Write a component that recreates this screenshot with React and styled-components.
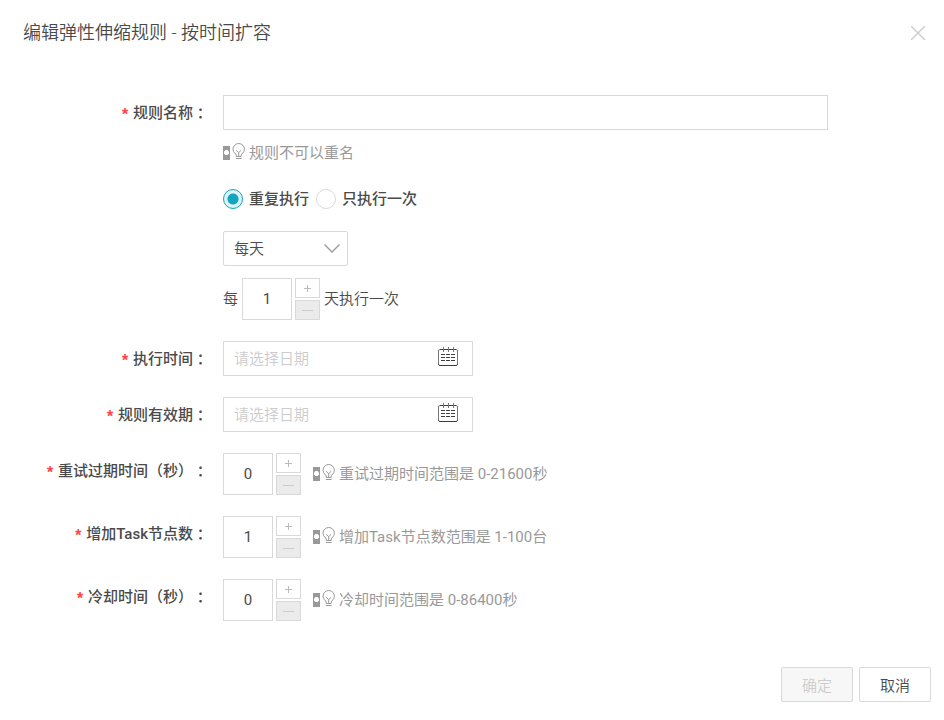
import React, { useState } from "react";
import styled, { createGlobalStyle } from "styled-components";

const CalendarIcon = () => (
  <svg width="21" height="24" viewBox="0 0 21 24" fill="none" stroke="#3c3c3c">
    <path d="M0.5 18V5a1.500 1.500 0 0 1 1.500-1.500h16a1.500 1.500 0 0 1 1.500 1.500v13" stroke="#777" />
    <path d="M0.500 18a1.500 1.500 0 0 0 1.500 1.500h16a1.500 1.500 0 0 0 1.500-1.500M2 3.500h16" />
    <path d="M5.500 1v5M10.500 1v5M15.500 1v5" stroke="#777" />
    <path d="M3 8.500h4M8 8.500h4M13 8.500h4M3 11.500h4M8 11.500h4M13 11.500h4M3 14.500h4M8 14.500h4M13 14.500h4" />
  </svg>
);

const BulbIcon = () => (
  <svg width="23" height="20" viewBox="0 0 23 20" fill="none" stroke="#999">
    <path d="M0 3h7v14H0z" fill="#999" stroke="none" />
    <path d="M2.500 7h2l1.500 1.500v2L4.500 12h-2L1 10.500v-2z" fill="#fff" stroke="none" />
    <path d="M13.200 13.500v-1.500c0-1.200-3.200-2.400-3.200-5.800a5.700 5.700 0 0 1 11.400 0c0 3.400-3.200 4.600-3.200 5.800v1.500z" />
    <path d="M12.800 15.500h5.800M13.300 7.300l2.400 2.400 2.400-2.400M15.700 9.700v3.800" />
  </svg>
);

const Hint = ({ children }) => (
  <HintText>
    <BulbIcon />
    {children}
  </HintText>
);

const Field = ({ label, htmlFor, children }) => (
  <FieldRow>
    <Label htmlFor={htmlFor}>
      <Star>*</Star>
      <span>{label}</span>
      <Colon>：</Colon>
    </Label>
    <Content>{children}</Content>
  </FieldRow>
);

const Stepper = ({ id, label, min }) => {
  const [value, setValue] = useState(min);
  return (
    <StepperBox>
      <StepperInput
        id={id}
        aria-label={label}
        value={value}
        onChange={(e) => setValue(Number(e.target.value) || min)}
      />
      <StepperButtons>
        <StepButton type="button" aria-label="增加" onClick={() => setValue(value + 1)}>
          <svg width="7" height="7" viewBox="0 0 7 7" stroke="currentColor">
            <path d="M3.500 0v7M0 3.500h7" />
          </svg>
        </StepButton>
        <StepButton
          type="button"
          aria-label="减少"
          disabled={value <= min}
          onClick={() => setValue(value - 1)}
        >
          <svg width="11" height="7" viewBox="0 0 11 7" stroke="currentColor">
            <path d="M0 3.500h11" />
          </svg>
        </StepButton>
      </StepperButtons>
    </StepperBox>
  );
};

const DatePicker = ({ id }) => (
  <DateBox>
    <DateInput id={id} placeholder="请选择日期" />
    <CalendarIcon />
  </DateBox>
);

const App = () => {
  const [repeat, setRepeat] = useState(true);
  return (
    <Dialog role="dialog" aria-labelledby="title">
      <GlobalStyle />
      <Header>
        <Title id="title">编辑弹性伸缩规则 - 按时间扩容</Title>
        <CloseButton type="button" aria-label="关闭">
          <svg width="14" height="14" viewBox="0 0 14 14" stroke="#ccc" strokeWidth="1.4">
            <path d="M0 0l14 14M14 0L0 14" />
          </svg>
        </CloseButton>
      </Header>

      <Form>
        <Field label="规则名称" htmlFor="name">
          <Stack>
            <TextInput id="name" />
            <NameHint>
              <Hint>规则不可以重名</Hint>
            </NameHint>
            <RadioGroup>
              <RadioLabel>
                <Radio name="mode" checked={repeat} onChange={() => setRepeat(true)} />
                重复执行
              </RadioLabel>
              <RadioLabel>
                <Radio name="mode" checked={!repeat} onChange={() => setRepeat(false)} />
                只执行一次
              </RadioLabel>
            </RadioGroup>
            <SelectBox>
              <Select aria-label="执行周期">
                <option>每天</option>
                <option>每周</option>
                <option>每月</option>
              </Select>
              <svg width="16" height="9" viewBox="0 0 16 9" fill="none" stroke="#999" strokeWidth="1.3">
                <path d="M0.500 0.500L8 8l7.500-7.500" />
              </svg>
            </SelectBox>
            <Interval>
              <span>每</span>
              <Stepper label="间隔天数" min={1} />
              <span>天执行一次</span>
            </Interval>
          </Stack>
        </Field>
        <Field label="执行时间" htmlFor="runAt">
          <DatePicker id="runAt" />
        </Field>
        <Field label="规则有效期" htmlFor="expires">
          <DatePicker id="expires" />
        </Field>
        <Field label="重试过期时间（秒）" htmlFor="retry">
          <Stepper id="retry" min={0} />
          <Hint>重试过期时间范围是 0-21600秒</Hint>
        </Field>
        <Field label="增加Task节点数" htmlFor="nodes">
          <Stepper id="nodes" min={1} />
          <Hint>增加Task节点数范围是 1-100台</Hint>
        </Field>
        <Field label="冷却时间（秒）" htmlFor="cooldown">
          <Stepper id="cooldown" min={0} />
          <Hint>冷却时间范围是 0-86400秒</Hint>
        </Field>
      </Form>

      <Footer>
        <Button type="button" disabled>
          确定
        </Button>
        <Button type="button">取消</Button>
      </Footer>
    </Dialog>
  );
};

const GlobalStyle = createGlobalStyle`
  * {
    box-sizing: border-box;
  }
  body {
    margin: 0;
    background: #fff;
    line-height: 20px;
  }
  body, button, input, select {
    font-family: Roboto, "Noto Sans CJK SC", sans-serif;
    font-size: 15px;
    font-weight: 350;
    color: #4a4a4a;
  }
  svg {
    flex-shrink: 0;
  }
`;

const Dialog = styled.div`
  display: flex;
  flex-direction: column;
`;

const Header = styled.header`
  display: flex;
  align-items: center;
  justify-content: space-between;
  height: 66px;
  padding: 0 19px 0 23px;
`;

const Title = styled.h1`
  margin: 0;
  font-size: 18px;
  font-weight: 350;
  line-height: 24px;
`;

const CloseButton = styled.button`
  display: flex;
  padding: 0;
  border: 0;
  background: none;
  cursor: pointer;
`;

const Form = styled.form`
  display: flex;
  flex-direction: column;
  gap: 21px;
  padding: 29px 116px 46px 23px;
`;

const FieldRow = styled.div`
  display: grid;
  grid-template-columns: 185px 1fr;
  column-gap: 15px;
  align-items: start;
`;

const Label = styled.label`
  display: flex;
  align-items: center;
  justify-content: flex-end;
  height: 35px;
  font-weight: 500;
  white-space: nowrap;
  text-spacing-trim: space-all;
`;

const Star = styled.span`
  margin-right: 3px;
  padding-top: 6px;
  color: #f44;
  font-family: "Liberation Mono", monospace;
  font-size: 16px;
  font-weight: 700;
`;

const Colon = styled.span`
  font-family: "Noto Sans CJK TC", sans-serif;
`;

const Content = styled.div`
  display: flex;
  align-items: center;
  gap: 12px;
`;

const Stack = styled.div`
  display: flex;
  flex: 1;
  flex-direction: column;
  align-items: flex-start;
`;

const HintText = styled.div`
  display: flex;
  align-items: center;
  gap: 3px;
  color: #999;
  font-weight: 400;
`;

const NameHint = styled.div`
  display: flex;
  height: 46px;
`;

const TextInput = styled.input`
  width: 100%;
  height: 35px;
  padding: 0 10px;
  border: 1px solid #d9d9d9;
  outline: none;
`;

const RadioGroup = styled.div`
  display: flex;
  align-items: center;
  gap: 7px;
  height: 46px;
`;

const RadioLabel = styled.label`
  display: flex;
  align-items: center;
  gap: 6px;
  font-weight: 500;
`;

const Radio = styled.input.attrs({ type: "radio" })`
  appearance: none;
  width: 20px;
  height: 20px;
  margin: 0;
  border: 1px solid #d9d9d9;
  border-radius: 50%;

  &:checked {
    border-color: #12a5bf;
    background: radial-gradient(circle, #12a5bf 5px, #dff3f6 6px);
  }
`;

const SelectBox = styled.div`
  display: flex;
  align-items: center;
  position: relative;
  margin: 9px 0 12px;

  svg {
    position: absolute;
    right: 8px;
    pointer-events: none;
  }
`;

const Select = styled.select`
  appearance: none;
  width: 125px;
  height: 35px;
  padding: 0 10px;
  border: 1px solid #d9d9d9;
  border-radius: 2px;
  background: #fff;
`;

const Interval = styled.div`
  display: flex;
  align-items: center;
  gap: 4px;
`;

const StepperBox = styled.div`
  display: flex;
  gap: 3px;
`;

const StepperInput = styled.input`
  width: 50px;
  height: 42px;
  padding: 0;
  border: 1px solid #d9d9d9;
  font-weight: 400;
  text-align: center;
`;

const StepperButtons = styled.div`
  display: flex;
  flex-direction: column;
  gap: 2px;
`;

const StepButton = styled.button`
  display: flex;
  align-items: center;
  justify-content: center;
  width: 25px;
  height: 20px;
  padding: 0;
  border: 1px solid #d9d9d9;
  background: #fff;
  color: #bbb;

  &:disabled {
    background: #ebebeb;
    color: #ccc;
  }
`;

const DateBox = styled.div`
  display: flex;
  align-items: center;
  width: 250px;
  height: 35px;
  padding: 0 13px 2px 10px;
  border: 1px solid #d9d9d9;
`;

const DateInput = styled.input`
  flex: 1;
  min-width: 0;
  height: 31px;
  padding: 2px 0 0;
  border: 0;
  outline: none;
  background: none;

  &::placeholder {
    color: #ccc;
  }
`;

const Footer = styled.footer`
  display: flex;
  justify-content: flex-end;
  gap: 6px;
  padding: 0 13px 18px;
`;

const Button = styled.button`
  min-width: 72px;
  height: 35px;
  padding: 0 20px;
  border: 1px solid #d9d9d9;
  border-radius: 2px;
  background: #fff;

  &:disabled {
    background: #f7f7f7;
    color: #ccc;
  }
`;

export default App;
